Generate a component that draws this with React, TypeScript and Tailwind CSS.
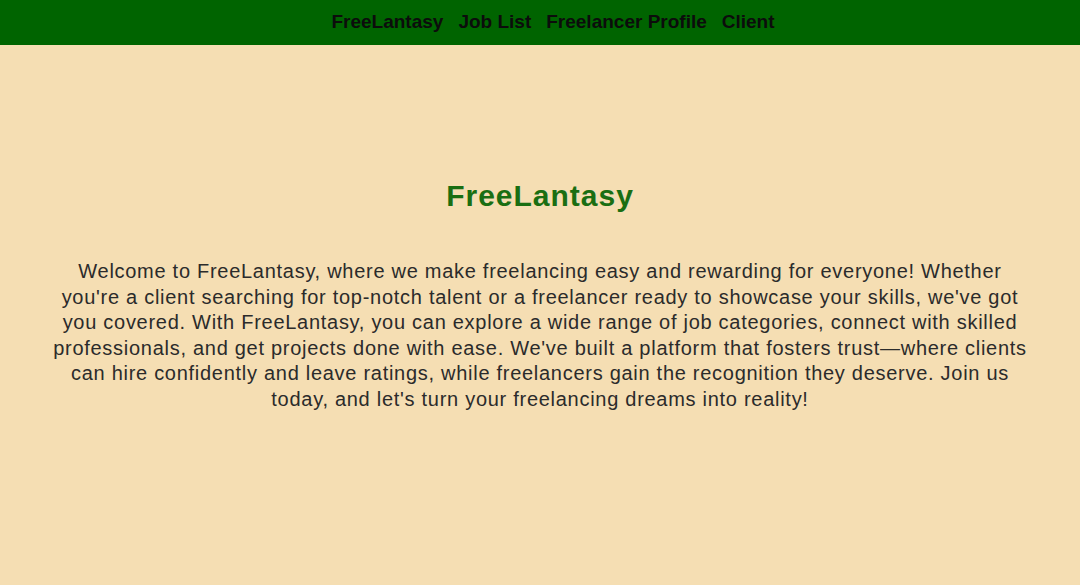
export default function App() {
  return (
    <div className="min-h-[585px] bg-[#f5deb3] font-['Liberation_Sans',Arial,sans-serif]">
      <nav className="h-[45px] bg-[#006400] flex items-center justify-center gap-[15px] pl-[26px]">
        <a className="text-[19px] font-bold text-[#0c0c0c]">FreeLantasy</a>
        <a className="text-[19px] font-bold text-[#0c0c0c]">Job List</a>
        <a className="text-[19px] font-bold text-[#0c0c0c]">Freelancer Profile</a>
        <a className="text-[19px] font-bold text-[#0c0c0c]">Client</a>
      </nav>
      <main className="flex flex-col items-center pt-[132px] px-[50px]">
        <h1 className="text-[30px] font-bold tracking-[1px] text-[#1a6e12] leading-[38px]">FreeLantasy</h1>
        <p className="mt-[44px] text-[20px] tracking-[0.72px] leading-[25.5px] text-[#2b2b2b] text-center">
          Welcome to FreeLantasy, where we make freelancing easy and rewarding for everyone! Whether you're a client
          searching for top-notch talent or a freelancer ready to showcase your skills, we've got you covered. With
          FreeLantasy, you can explore a wide range of job categories, connect with skilled professionals, and get
          projects done with ease. We've built a platform that fosters trust—where clients can hire confidently and
          leave ratings, while freelancers gain the recognition they deserve. Join us today, and let's turn your
          freelancing dreams into reality!
        </p>
      </main>
    </div>
  )
}
